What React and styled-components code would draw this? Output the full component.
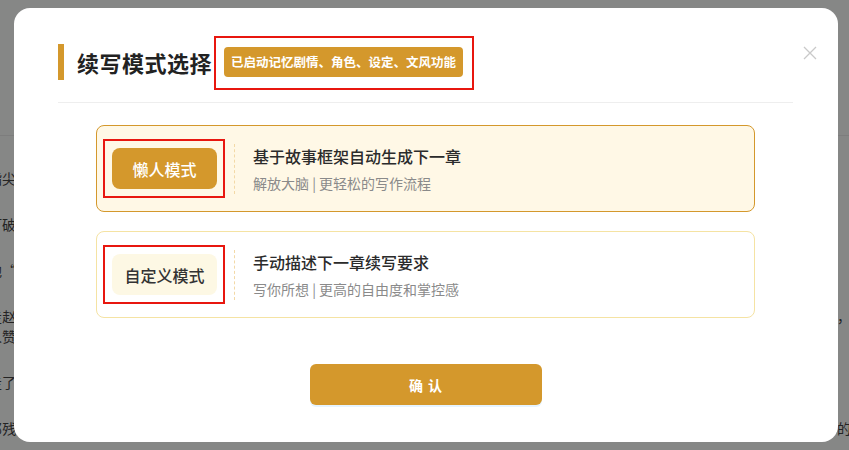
import React from "react";
import styled, { createGlobalStyle } from "styled-components";

const GlobalStyle = createGlobalStyle`
  html, body { margin: 0; padding: 0; }
  body {
    background: #fdfffe;
    font-family: "Noto Sans CJK SC", "Noto Sans", sans-serif;
    overflow: hidden;
  }
  * { box-sizing: border-box; }
`;

const GOLD = "#d4982c";
const RED = "#e8170f";

/* ---------- background page ---------- */
const Page = styled.div`
  width: 849px;
  height: 442px;
  overflow: hidden;
`;

const PageHeader = styled.div`
  height: 136px;
  border-bottom: 1px solid #ececec;
`;

const Article = styled.div`
  margin: 32px 0 0 -12px;
  width: 863px;
  color: #444;
  font-size: 14px;
  line-height: 20px;
`;

const Para = styled.p`
  margin: 0 0 26px;
  text-align: justify;
`;

/* ---------- modal ---------- */
const Overlay = styled.div`
  position: fixed;
  inset: 0;
  background: rgba(0, 0, 0, 0.47);
  display: flex;
  align-items: flex-start;
  padding: 8px 0 0 14px;
`;

const Modal = styled.div`
  position: relative;
  width: 824px;
  background: #fff;
  border-radius: 16px;
  padding: 36px 45px 37px 44px;
`;

const Close = styled.button`
  position: absolute;
  top: 38px;
  right: 21px;
  width: 14px;
  height: 14px;
  padding: 0;
  border: none;
  background: none;
  cursor: pointer;
  display: block;
`;

const Header = styled.div`
  display: flex;
  align-items: center;
  height: 36px;
  border-left: 6px solid ${GOLD};
  padding-left: 13px;
`;

const Title = styled.h2`
  margin: 0;
  font-size: 22px;
  font-weight: 700;
  letter-spacing: 0.5px;
  color: #222;
  line-height: 30px;
`;

const Marked = styled.div`
  position: relative;
  display: inline-flex;
  margin-left: ${(p) => p.$ml || 0}px;
  &::after {
    content: "";
    position: absolute;
    top: ${(p) => -p.$t}px;
    bottom: ${(p) => -p.$b}px;
    left: ${(p) => -p.$l}px;
    right: ${(p) => -p.$r}px;
    border: 2px solid ${RED};
    pointer-events: none;
  }
`;

const Badge = styled.span`
  display: inline-block;
  background: ${GOLD};
  color: #fff;
  font-size: 12.5px;
  font-weight: 700;
  line-height: 30px;
  height: 30px;
  padding: 0 7px;
  border-radius: 4px;
  white-space: nowrap;
`;

const Divider = styled.div`
  height: 1px;
  background: #eeeeee;
  margin: 22px 0 22px;
`;

const Cards = styled.div`
  display: flex;
  flex-direction: column;
  gap: 19px;
  padding: 0 38px;
`;

const Card = styled.div`
  display: flex;
  align-items: center;
  height: 87px;
  padding: 0 15px;
  border-radius: 8px;
  border: 1px solid ${(p) => (p.$active ? GOLD : "#f5e3a3")};
  background: ${(p) => (p.$active ? "#fff8e6" : "#fff")};
  cursor: pointer;
`;

const ModeButton = styled.div`
  width: 105px;
  height: 41px;
  border-radius: 8px;
  display: flex;
  align-items: center;
  justify-content: center;
  font-size: 16px;
  font-weight: 500;
  background: ${(p) => (p.$active ? GOLD : "#fdf8e4")};
  color: ${(p) => (p.$active ? "#fff" : "#333")};
`;

const Sep = styled.div`
  width: 0;
  height: 50px;
  border-left: 1px dashed #f3d9a6;
  margin: 0 18px 0 17px;
`;

const CardText = styled.div`
  display: flex;
  flex-direction: column;
`;

const CardTitle = styled.div`
  font-size: 16px;
  font-weight: 500;
  color: #2b2b2b;
  line-height: 22px;
  margin-bottom: 6px;
`;

const CardSub = styled.div`
  font-size: 14px;
  color: #8a8a8a;
  line-height: 20px;
`;

const Footer = styled.div`
  display: flex;
  justify-content: center;
  margin-top: 46px;
`;

const Confirm = styled.button`
  width: 232px;
  height: 41px;
  border: none;
  border-radius: 6px;
  background: ${GOLD};
  color: #fff;
  font-family: inherit;
  font-size: 14px;
  font-weight: 700;
  letter-spacing: 1px;
  box-shadow: 0 2px 0 rgba(5, 145, 255, 0.1);
  cursor: pointer;
  margin-left: 1px;
`;

const modes = [
  {
    key: "lazy",
    label: "懒人模式",
    title: "基于故事框架自动生成下一章",
    sub: "解放大脑 | 更轻松的写作流程",
    active: true,
  },
  {
    key: "custom",
    label: "自定义模式",
    title: "手动描述下一章续写要求",
    sub: "写你所想 | 更高的自由度和掌控感",
    active: false,
  },
];

const paragraphs = [
  "指尖微微颤抖，他望着远处的山峦，心中翻涌着说不清的情绪。",
  "打破沉默的是一阵急促的脚步声，院门被人猛地推开。",
  "他“手里握着那封信，迟迟没有拆开，只是低头看着。",
  "走赵家的大门前站满了人众人议论纷纷谁也不敢上前一步只有那个少年缓缓走了出来抬头望向众人声音不大却字字清晰所有人都安静下来，人赞叹与质疑交织在一起。",
  "走了很久，他终于停下脚步，回头望了一眼。",
  "那残阳如血映照在破旧的城墙上仿佛在诉说着那段早已被人遗忘的往事他静静地站着望着远方渐渐暗下去的天空心中满是说不出也道不尽的滋味。",
];

export default function App() {
  return (
    <>
      <GlobalStyle />
      <Page>
        <PageHeader />
        <Article>
          {paragraphs.map((t, i) => (
            <Para key={i}>{t}</Para>
          ))}
        </Article>
      </Page>
      <Overlay>
        <Modal>
          <Close aria-label="关闭">
            <svg width="14" height="14" viewBox="0 0 14 14">
              <path d="M1 1L13 13M13 1L1 13" stroke="#c9c9c9" strokeWidth="1.3" />
            </svg>
          </Close>
          <Header>
            <Title>续写模式选择</Title>
            <Marked $ml={12} $t={11} $b={13} $l={10} $r={11}>
              <Badge>已启动记忆剧情、角色、设定、文风功能</Badge>
            </Marked>
          </Header>
          <Divider />
          <Cards>
            {modes.map((m) => (
              <Card key={m.key} $active={m.active}>
                <Marked $t={9} $b={9} $l={9} $r={8}>
                  <ModeButton $active={m.active}>{m.label}</ModeButton>
                </Marked>
                <Sep />
                <CardText>
                  <CardTitle>{m.title}</CardTitle>
                  <CardSub>{m.sub}</CardSub>
                </CardText>
              </Card>
            ))}
          </Cards>
          <Footer>
            <Confirm>确 认</Confirm>
          </Footer>
        </Modal>
      </Overlay>
    </>
  );
}
